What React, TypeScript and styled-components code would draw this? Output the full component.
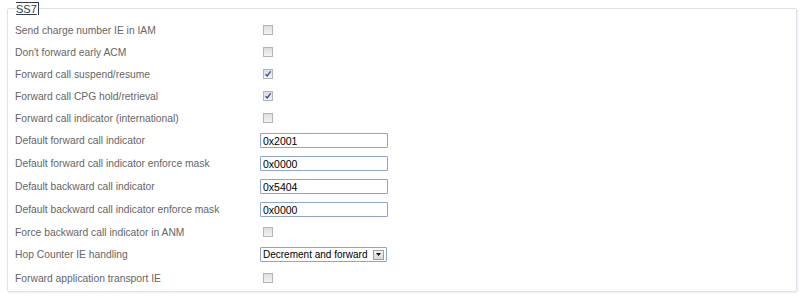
import styled, { createGlobalStyle } from "styled-components";

type Row =
  | { label: string; kind: "check"; checked?: boolean }
  | { label: string; kind: "text"; value: string }
  | { label: string; kind: "select"; value: string };

const rows: Row[] = [
  { label: "Send charge number IE in IAM", kind: "check" },
  { label: "Don't forward early ACM", kind: "check" },
  { label: "Forward call suspend/resume", kind: "check", checked: true },
  { label: "Forward call CPG hold/retrieval", kind: "check", checked: true },
  { label: "Forward call indicator (international)", kind: "check" },
  { label: "Default forward call indicator", kind: "text", value: "0x2001" },
  { label: "Default forward call indicator enforce mask", kind: "text", value: "0x0000" },
  { label: "Default backward call indicator", kind: "text", value: "0x5404" },
  { label: "Default backward call indicator enforce mask", kind: "text", value: "0x0000" },
  { label: "Force backward call indicator in ANM", kind: "check" },
  { label: "Hop Counter IE handling", kind: "select", value: "Decrement and forward" },
  { label: "Forward application transport IE", kind: "check" },
];

const App = () => {
  return (
    <>
      <GlobalStyle />
      <Page>
        <Fieldset>
          <Legend>SS7</Legend>
          {rows.map((row, i) => (
            <FormRow
              key={row.label}
              $height={row.kind === "check" ? (i === rows.length - 1 ? 24 : 22) : 23}
            >
              <Label>{row.label}</Label>
              <Control>
                {row.kind === "check" && (
                  <CheckBox>
                    {row.checked && (
                      <svg width="8" height="8" viewBox="0 0 8 8">
                        <path d="M1.5 4.2 L3.2 6 L6.6 1.4" fill="none" stroke="#2a4aa8" strokeWidth="1.3" />
                      </svg>
                    )}
                  </CheckBox>
                )}
                {row.kind === "text" && <TextInput defaultValue={row.value} />}
                {row.kind === "select" && (
                  <SelectBox>
                    <span>{row.value}</span>
                    <ArrowButton>
                      <svg width="5" height="3" viewBox="0 0 5 3">
                        <path d="M0 0 H5 L2.5 3 Z" fill="#111" />
                      </svg>
                    </ArrowButton>
                  </SelectBox>
                )}
              </Control>
            </FormRow>
          ))}
        </Fieldset>
      </Page>
    </>
  );
};

const GlobalStyle = createGlobalStyle`
  body {
    margin: 0;
    background: #ffffff;
    font-family: "Liberation Sans", Arial, sans-serif;
  }
`;

const Page = styled.div`
  width: 800px;
  height: 298px;
  padding: 2px 3px 0 7px;
  box-sizing: border-box;
`;

const Fieldset = styled.fieldset`
  margin: 0;
  height: 290px;
  box-sizing: border-box;
  padding: 4px 8px 0 7px;
  border: 1px solid #dde3e9;
  border-radius: 2px;
  box-shadow: 1px 1px 2px #e8edf2;
`;

const Legend = styled.legend`
  padding: 0 1px 0 0;
  margin-left: 1px;
  font-size: 11px;
  line-height: 12px;
  color: #333a4a;
  text-decoration: underline;
  border-right: 1px solid #333a4a;
  border-top: 1px solid #333a4a;
`;

const FormRow = styled.div<{ $height: number }>`
  display: grid;
  grid-template-columns: 245px 1fr;
  align-items: center;
  height: ${(p) => p.$height}px;
`;

const Label = styled.span`
  font-size: 10.3px;
  color: #666;
  white-space: nowrap;
`;

const Control = styled.div`
  display: flex;
  align-items: center;
`;

const CheckBox = styled.span`
  width: 10px;
  height: 10px;
  margin-left: 3px;
  box-sizing: border-box;
  border: 1px solid #b4b4b4;
  background: linear-gradient(#dcdcdc, #f4f4f4);
  display: flex;
  align-items: center;
  justify-content: center;
`;

const TextInput = styled.input`
  width: 128px;
  height: 15px;
  box-sizing: border-box;
  border: 1px solid #8ea5c4;
  border-radius: 1px;
  padding: 0 2px;
  font-family: "Liberation Sans", Arial, sans-serif;
  font-size: 10.5px;
  color: #000;
  outline: none;
`;

const SelectBox = styled.div`
  width: 127px;
  height: 15px;
  box-sizing: border-box;
  border: 1px solid #8ea5c4;
  border-radius: 1px;
  display: flex;
  align-items: center;
  justify-content: space-between;
  padding: 0 2px 0 2px;
  font-size: 10px;
  color: #000;
  white-space: nowrap;
`;

const ArrowButton = styled.span`
  width: 11px;
  height: 10px;
  box-sizing: border-box;
  border: 1px solid #a0a0a0;
  background: linear-gradient(#f4f4f4, #d8d8d8);
  display: flex;
  align-items: center;
  justify-content: center;
`;

export default App;
